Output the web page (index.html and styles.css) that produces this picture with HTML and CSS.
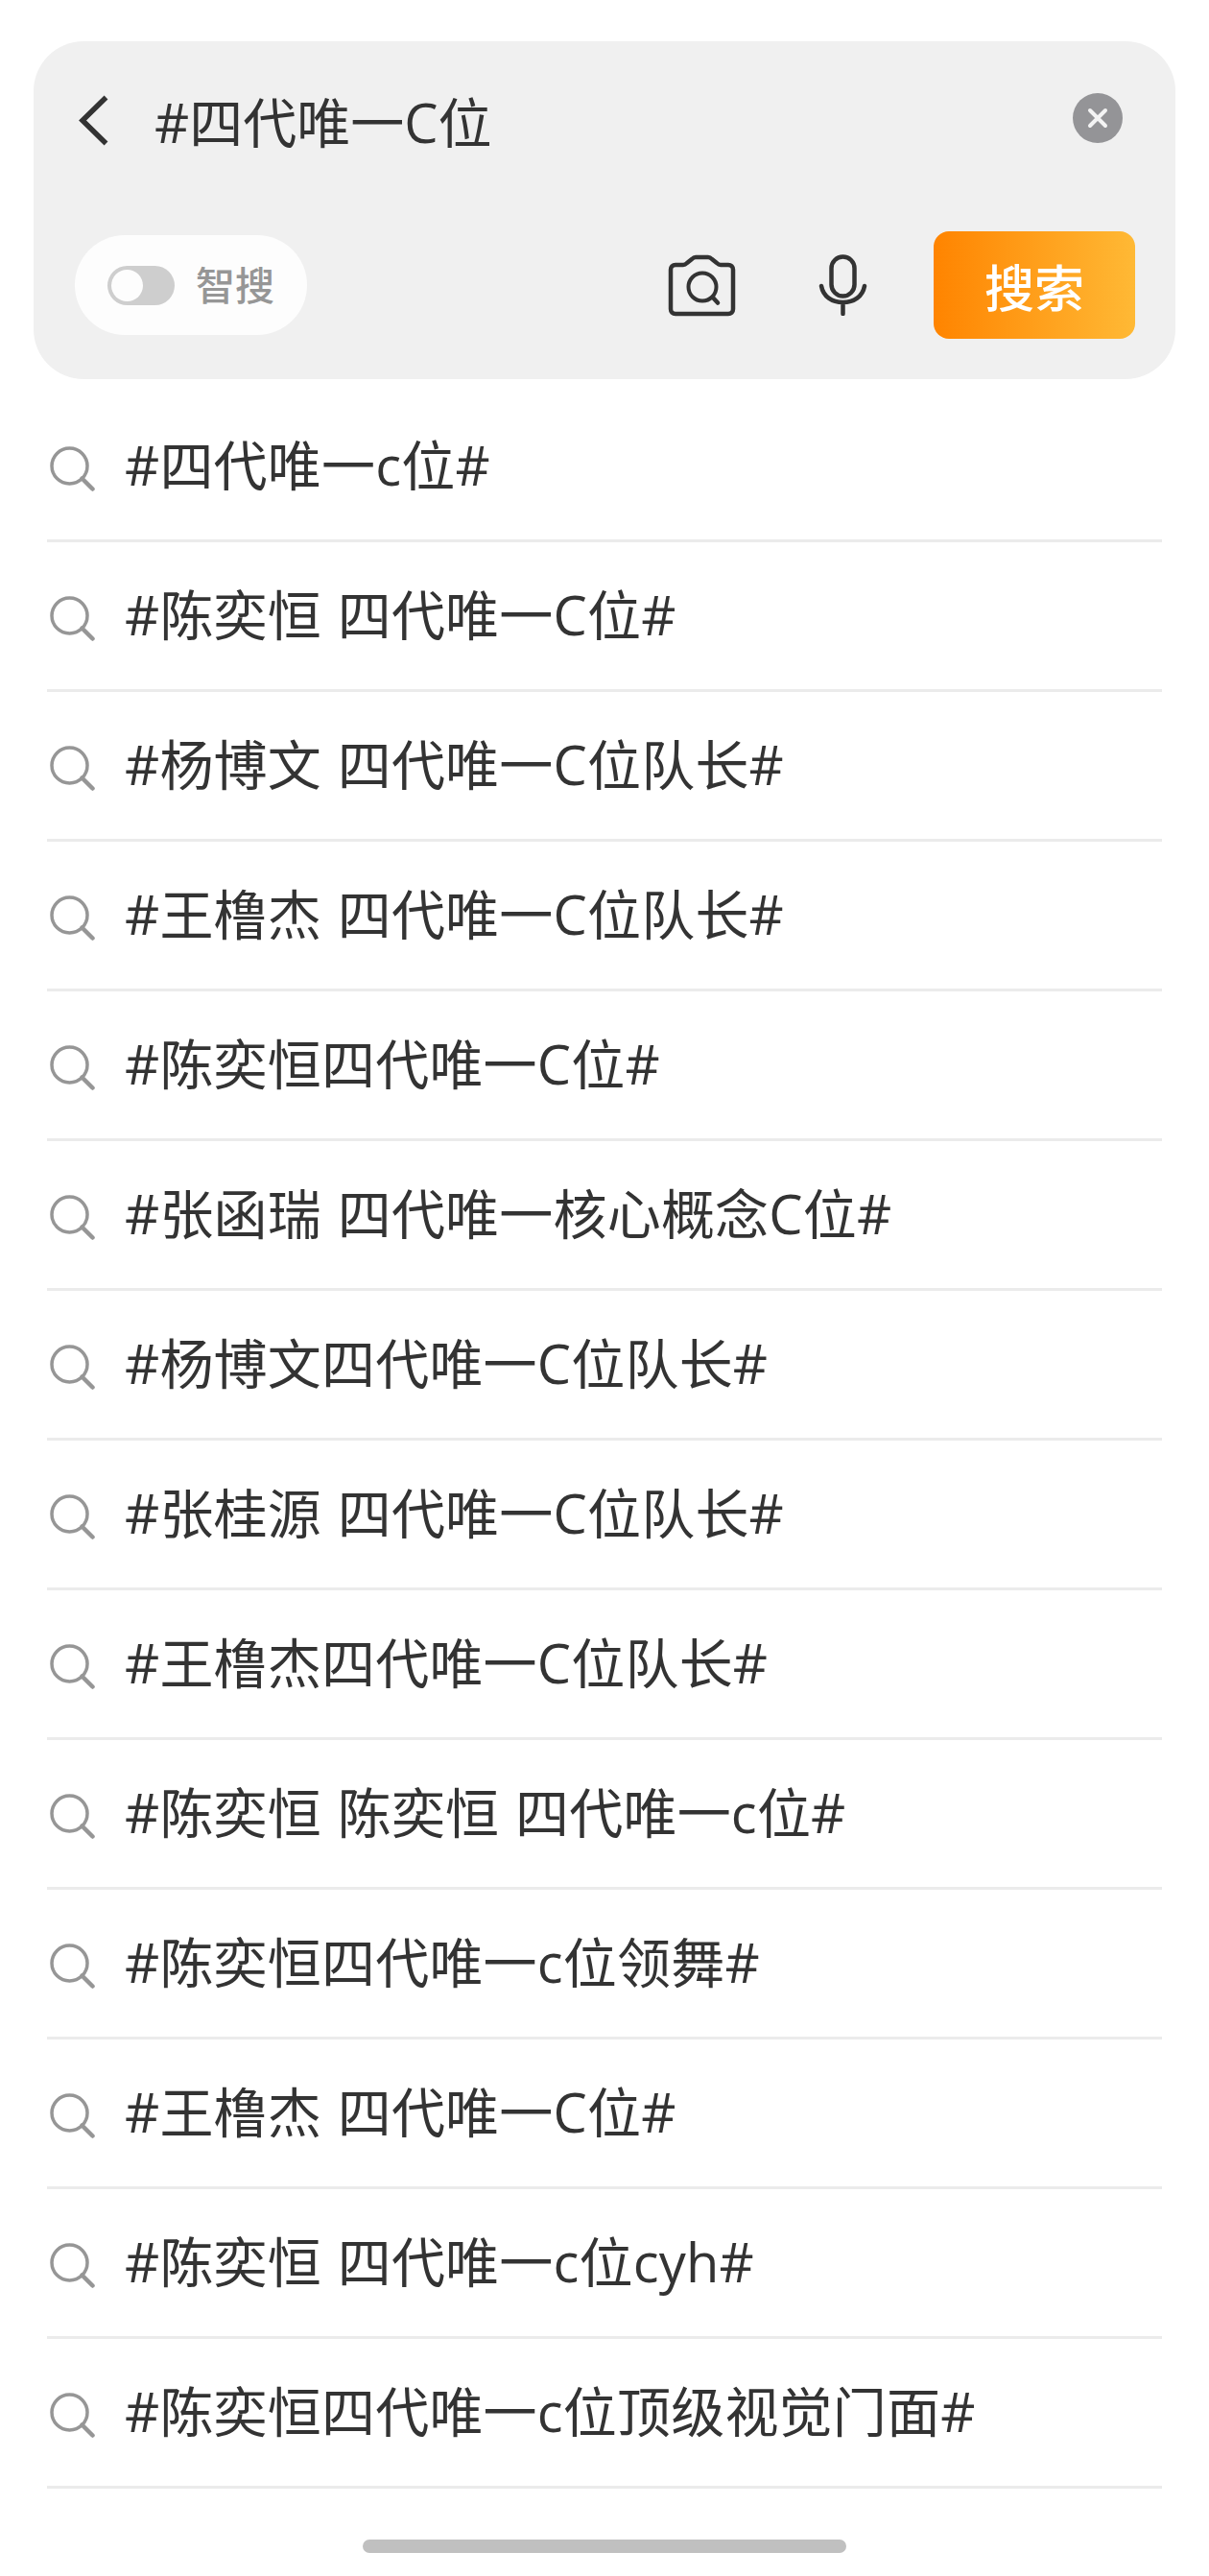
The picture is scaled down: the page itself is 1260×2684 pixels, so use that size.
FILE: index.html
```html
<!DOCTYPE html>
<html lang="zh-CN">
<head>
<meta charset="utf-8">
<title>搜索</title>
<link rel="stylesheet" href="styles.css">
</head>
<body>
<svg class="defs" width="0" height="0" aria-hidden="true">
  <symbol id="s" viewBox="0 0 47 47">
    <circle cx="20.500" cy="20.500" r="18.500" fill="none" stroke="#969696" stroke-width="3.500"/>
    <path d="M33.500 33.500l11 11" fill="none" stroke="#969696" stroke-width="4.500" stroke-linecap="round"/>
  </symbol>
</svg>
<header class="panel">
  <div class="top">
    <svg class="back" viewBox="0 0 31 53"><path d="M28.500 2.500L4 26.500l24.500 24" fill="none" stroke="#333" stroke-width="5.500"/></svg>
    <div class="query">#四代唯一C位</div>
    <svg class="clear" viewBox="0 0 52 52"><circle cx="26" cy="26" r="26" fill="#949497"/><path d="M18 18l16 16M34 18L18 34" stroke="#f4f4f4" stroke-width="4" stroke-linecap="round"/></svg>
  </div>
  <div class="bottom">
    <div class="pill">
      <span class="toggle"><span class="knob"></span></span>
      <span class="pill-label">智搜</span>
    </div>
    <svg class="camera" viewBox="0 0 71 65"><path d="M8 11h8c2 0 3-1 4-2l5-4c1-1 2-2 4-2h13c2 0 3 1 4 2l5 4c1 1 2 2 4 2h8c3 0 5 2 5 5v41c0 3-2 5-5 5H8c-3 0-5-2-5-5V16c0-3 2-5 5-5z" fill="none" stroke="#333" stroke-width="4.500" stroke-linejoin="round"/><circle cx="36" cy="34" r="14.500" fill="none" stroke="#333" stroke-width="4"/><path d="M47 45l5 5.500" stroke="#333" stroke-width="4.500" stroke-linecap="round"/></svg>
    <svg class="mic" viewBox="0 0 51 64"><rect x="13.500" y="2.500" width="24" height="41" rx="12" fill="none" stroke="#333" stroke-width="4.500"/><path d="M3 33c2 11 11 17 22.500 17S46 44 48 33M25.500 50v12" fill="none" stroke="#333" stroke-width="4.500" stroke-linecap="round"/></svg>
    <button class="go">搜索</button>
  </div>
</header>
<ul class="list">
  <li class="row"><svg class="lens"><use href="#s"/></svg><span class="tx">#四代唯一c位#</span></li>
  <li class="row"><svg class="lens"><use href="#s"/></svg><span class="tx">#陈奕恒 四代唯一C位#</span></li>
  <li class="row"><svg class="lens"><use href="#s"/></svg><span class="tx">#杨博文 四代唯一C位队长#</span></li>
  <li class="row"><svg class="lens"><use href="#s"/></svg><span class="tx">#王橹杰 四代唯一C位队长#</span></li>
  <li class="row"><svg class="lens"><use href="#s"/></svg><span class="tx">#陈奕恒四代唯一C位#</span></li>
  <li class="row"><svg class="lens"><use href="#s"/></svg><span class="tx">#张函瑞 四代唯一核心概念C位#</span></li>
  <li class="row"><svg class="lens"><use href="#s"/></svg><span class="tx">#杨博文四代唯一C位队长#</span></li>
  <li class="row"><svg class="lens"><use href="#s"/></svg><span class="tx">#张桂源 四代唯一C位队长#</span></li>
  <li class="row"><svg class="lens"><use href="#s"/></svg><span class="tx">#王橹杰四代唯一C位队长#</span></li>
  <li class="row"><svg class="lens"><use href="#s"/></svg><span class="tx">#陈奕恒 陈奕恒 四代唯一c位#</span></li>
  <li class="row"><svg class="lens"><use href="#s"/></svg><span class="tx">#陈奕恒四代唯一c位领舞#</span></li>
  <li class="row"><svg class="lens"><use href="#s"/></svg><span class="tx">#王橹杰 四代唯一C位#</span></li>
  <li class="row"><svg class="lens"><use href="#s"/></svg><span class="tx">#陈奕恒 四代唯一c位cyh#</span></li>
  <li class="row"><svg class="lens"><use href="#s"/></svg><span class="tx">#陈奕恒四代唯一c位顶级视觉门面#</span></li>
</ul>
<div class="home"></div>
</body>
</html>
```
FILE: styles.css
```css
* { box-sizing: border-box; }
html, body { margin: 0; padding: 0; background: #fff; }
body {
  width: 1260px;
  height: 2684px;
  overflow: hidden;
  padding-top: 43px;
  font-family: "Open Sans", "Noto Sans CJK SC", sans-serif;
  color: #333;
}
.defs { position: absolute; }
.panel {
  margin: 0 35px;
  height: 352px;
  padding: 47px 42px 42px 43px;
  background: #f0f0f0;
  border-radius: 52px;
}
.top {
  height: 70px;
  padding: 0 13px 0 4px;
  display: flex;
  align-items: center;
}
.back { width: 31px; height: 53px; flex: none; }
.query {
  flex: 1;
  margin: 3px 0 0 48px;
  font-size: 56px;
  line-height: 66px;
  white-space: nowrap;
}
.clear { width: 52px; height: 52px; flex: none; margin-top: -4px; }
.bottom {
  margin-top: 81px;
  height: 112px;
  display: flex;
  align-items: center;
}
.pill {
  width: 242px;
  height: 104px;
  margin-right: auto;
  padding-left: 34px;
  display: flex;
  align-items: center;
  background: #fdfdfd;
  border-radius: 52px;
}
.toggle {
  width: 70px;
  height: 41px;
  padding: 4px;
  background: #cecece;
  border-radius: 21px;
}
.knob {
  display: block;
  width: 33px;
  height: 33px;
  background: #fdfdfd;
  border-radius: 50%;
}
.pill-label {
  margin-left: 22px;
  font-size: 41px;
  font-weight: 500;
  line-height: 48px;
  color: #969696;
}
.camera { width: 71px; height: 65px; flex: none; }
.mic { width: 51px; height: 64px; flex: none; margin-left: 86px; }
.go {
  width: 210px;
  height: 112px;
  margin-left: 69px;
  padding: 0;
  border: 0;
  border-radius: 16px;
  background: linear-gradient(90deg, #ff8400, #ffb935);
  color: #fff;
  font-family: inherit;
  font-size: 52px;
  font-weight: 500;
}
.list {
  list-style: none;
  margin: 14px 49px 0;
  padding: 0;
}
.row {
  height: 156px;
  display: flex;
  align-items: center;
  border-bottom: 3px solid #ebebeb;
}
.lens { width: 47px; height: 47px; flex: none; margin: 6px 0 0 3px; }
.tx {
  margin-left: 31px;
  padding-bottom: 4px;
  font-size: 56px;
  line-height: 70px;
  letter-spacing: 0.2px;
  word-spacing: 2px;
  white-space: pre;
  color: #333;
}
.home {
  width: 504px;
  height: 14px;
  margin: 53px auto 0;
  background: #c0c0c0;
  border-radius: 7px;
}
```
